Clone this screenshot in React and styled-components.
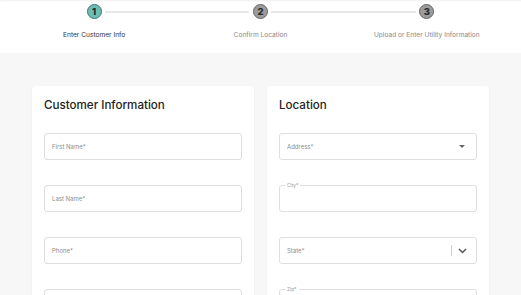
import React from 'react'
import styled, { createGlobalStyle } from 'styled-components'

const GlobalStyle = createGlobalStyle`
    body {
        margin: 0;
        background: #f7f7f7;
        font-family: "Inter", "Noto Sans", sans-serif;
        color: #222;
    }
`

const steps = [
    { n: 1, label: 'Enter Customer Info' },
    { n: 2, label: 'Confirm Location' },
    { n: 3, label: 'Upload or Enter Utility Information' },
]

const Stepper = () => (
    <Header>
        <StepRow>
            {steps.map((s, i) => (
                <Step key={s.n} $active={i === 0} $last={i === steps.length - 1}>
                    <Circle $active={i === 0}>{s.n}</Circle>
                    <StepLabel $active={i === 0}>{s.label}</StepLabel>
                </Step>
            ))}
        </StepRow>
    </Header>
)

const TextField = ({ label, floating }) => (
    <Field>
        {floating ? <FloatLabel>{label}</FloatLabel> : <Placeholder>{label}</Placeholder>}
    </Field>
)

const SelectField = ({ label }) => (
    <Field>
        <Placeholder>{label}</Placeholder>
        <Caret />
    </Field>
)

const ComboField = ({ label }) => (
    <Field>
        <Placeholder>{label}</Placeholder>
        <Indicators>
            <Separator />
            <svg width="9" height="6" viewBox="0 0 9 6">
                <path d="M1 1l3.5 3.5L8 1" fill="none" stroke="#555" strokeWidth="1.5" />
            </svg>
        </Indicators>
    </Field>
)

const App = () => {
    return (
        <>
            <GlobalStyle />
            <Stepper />
            <Main>
                <Card>
                    <Title>Customer Information</Title>
                    <Fields>
                        <TextField label="First Name*" />
                        <TextField label="Last Name*" />
                        <TextField label="Phone*" />
                        <TextField label="Email*" />
                    </Fields>
                </Card>
                <Card>
                    <Title>Location</Title>
                    <Fields>
                        <SelectField label="Address*" />
                        <TextField label="City*" floating />
                        <ComboField label="State*" />
                        <TextField label="Zip*" floating />
                    </Fields>
                </Card>
            </Main>
        </>
    )
}

const Header = styled.header`
    background: #fff;
    height: 53px;
    box-shadow: inset 0 2px 2px -1px rgba(0, 0, 0, 0.06);
`

const StepRow = styled.div`
    display: grid;
    grid-template-columns: repeat(3, 1fr);
    padding: 0 11px;
`

const Step = styled.div`
    position: relative;
    display: flex;
    flex-direction: column;
    align-items: center;
    padding-top: 4px;

    &::after {
        content: '';
        display: ${p => (p.$last ? 'none' : 'block')};
        position: absolute;
        top: 11px;
        left: calc(50% + 11px);
        width: calc(100% - 22px);
        height: 2px;
        background: #e8e8e8;
    }
`

const Circle = styled.div`
    width: 13px;
    height: 13px;
    border-radius: 50%;
    border: 1.5px solid ${p => (p.$active ? '#3f7770' : '#666')};
    background: ${p => (p.$active ? '#6cbdb3' : '#9b9b9b')};
    color: #2a2a2a;
    font-size: 9.5px;
    font-weight: 800;
    line-height: 13px;
    text-align: center;
`

const StepLabel = styled.div`
    margin-top: 12px;
    font-size: 6.6px;
    color: ${p => (p.$active ? '#333' : '#8a8a8a')};
    white-space: nowrap;
`

const Main = styled.main`
    display: grid;
    grid-template-columns: 222px 222px;
    gap: 13px;
    padding: 33px 32px 0;
`

const Card = styled.section`
    background: #fff;
    border-radius: 4px;
    box-shadow: 0 1px 3px rgba(0, 0, 0, 0.05);
    padding: 11px 12px 20px;
`

const Title = styled.h2`
    margin: 0 0 20px;
    font-size: 11.6px;
    line-height: 16px;
    font-weight: 500;
    color: #222;
`

const Fields = styled.div`
    display: flex;
    flex-direction: column;
    gap: 25px;
`

const Field = styled.div`
    position: relative;
    display: flex;
    align-items: center;
    height: 25px;
    padding: 0 7px;
    border: 1px solid #dedede;
    border-radius: 3px;
    background: #fff;
`

const Placeholder = styled.span`
    flex: 1;
    font-size: 6px;
    color: #8d8d8d;
`

const FloatLabel = styled.span`
    position: absolute;
    top: -4px;
    left: 5px;
    padding: 0 2px;
    background: #fff;
    font-size: 4.8px;
    line-height: 7px;
    color: #999;
`

const Caret = styled.span`
    width: 0;
    height: 0;
    margin-right: 4px;
    border-left: 3px solid transparent;
    border-right: 3px solid transparent;
    border-top: 3px solid #666;
`

const Indicators = styled.div`
    display: flex;
    align-items: center;
    gap: 6px;
    margin-right: 2px;
`

const Separator = styled.span`
    width: 1px;
    height: 11px;
    background: #cfcfcf;
`

export default App
